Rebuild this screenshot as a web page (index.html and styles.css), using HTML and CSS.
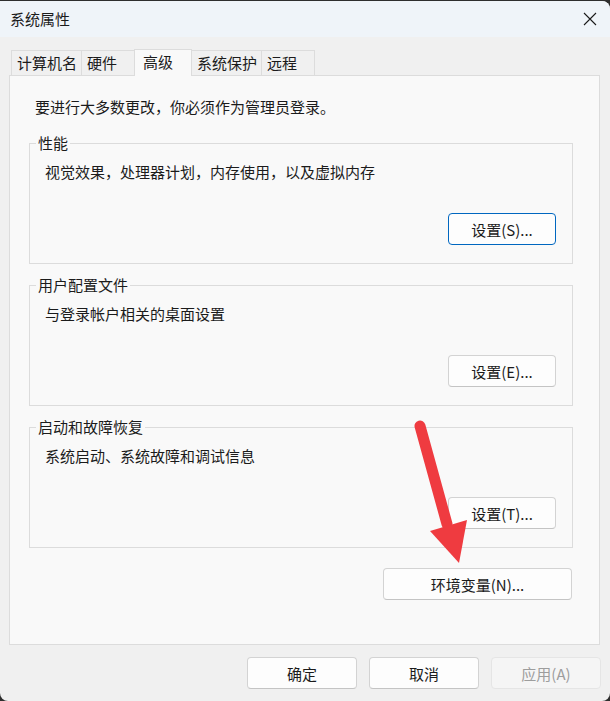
FILE: index.html
```html
<!DOCTYPE html>
<html lang="zh-CN">
<head>
  <meta charset="UTF-8">
  <title>系统属性</title>
  <meta name="viewport" content="width=device-width, initial-scale=1.0">
  <link rel="stylesheet" href="styles.css">
</head>
<body>
  <div class="window">
    <div class="titlebar">
      <span class="title">系统属性</span>
      <button class="close" aria-label="关闭">
        <svg width="14" height="14" viewBox="0 0 14 14">
          <path d="M1 1 L13 13 M13 1 L1 13" stroke="#1b1b1b" stroke-width="1.1" fill="none"/>
        </svg>
      </button>
    </div>

    <div class="tabs">
      <div class="tab">计算机名</div>
      <div class="tab">硬件</div>
      <div class="tab active">高级</div>
      <div class="tab">系统保护</div>
      <div class="tab">远程</div>
    </div>

    <div class="panel">
      <p class="note">要进行大多数更改，你必须作为管理员登录。</p>

      <fieldset class="group">
        <legend>性能</legend>
        <p class="desc">视觉效果，处理器计划，内存使用，以及虚拟内存</p>
        <div class="group-actions">
          <button class="btn btn-default">设置(S)...</button>
        </div>
      </fieldset>

      <fieldset class="group">
        <legend>用户配置文件</legend>
        <p class="desc">与登录帐户相关的桌面设置</p>
        <div class="group-actions">
          <button class="btn">设置(E)...</button>
        </div>
      </fieldset>

      <fieldset class="group">
        <legend>启动和故障恢复</legend>
        <p class="desc">系统启动、系统故障和调试信息</p>
        <div class="group-actions">
          <button class="btn">设置(T)...</button>
        </div>
      </fieldset>

      <div class="panel-actions">
        <button class="btn btn-wide">环境变量(N)...</button>
      </div>
    </div>

    <div class="footer">
      <button class="btn btn-footer">确定</button>
      <button class="btn btn-footer">取消</button>
      <button class="btn btn-footer" disabled>应用(A)</button>
    </div>

    <!-- red pointer drawn on top of the dialog -->
    <svg class="arrow" width="610" height="700" viewBox="0 1 610 700">
      <line x1="420" y1="426" x2="447" y2="524" stroke="#ef3b40" stroke-width="11" stroke-linecap="round"/>
      <polygon points="430,531 467,520 459,563" fill="#ef3b40"/>
    </svg>
  </div>
</body>
</html>
```

FILE: styles.css
```css
html, body {
  margin: 0;
  padding: 0;
  background: #2e2e2e;
  font-family: "Noto Sans CJK SC", "Noto Sans", sans-serif;
  font-size: 15px;
  color: #1b1b1b;
  overflow: hidden;
}
.window {
  position: relative;
  margin-top: 1px;
  width: 610px;
  height: 700px;
  background: #f0f0f0;
  border-radius: 0 8px 8px 8px;
  overflow: hidden;
  display: flex;
  flex-direction: column;
}
.titlebar {
  height: 36px;
  flex-shrink: 0;
  background: #eff4f9;
  display: flex;
  align-items: center;
  justify-content: space-between;
  padding: 0 13px 0 10px;
}
.title {
  line-height: 20px;
}
.close {
  border: none;
  background: transparent;
  padding: 0;
  width: 14px;
  height: 14px;
  display: flex;
}

/* tab strip */
.tabs {
  display: flex;
  align-items: flex-end;
  padding: 12px 0 0 11px;
  height: 26px;
  position: relative;
  z-index: 1;
}
.tab {
  box-sizing: border-box;
  min-width: 54px;
  height: 25px;
  padding: 0 4px 0 5px;
  border: 1px solid #dcdcdc;
  border-bottom: none;
  margin-left: -1px;
  background: #f0f0f0;
  line-height: 23px;
}
.tab:first-child {
  margin-left: 0;
}
.tab.active {
  height: 27px;
  min-width: 58px;
  padding: 0 8px;
  line-height: 24px;
  background: #f9f9f9;
  margin-bottom: -1px;
}

.panel {
  box-sizing: border-box;
  height: 570px;
  margin: 0 10px 0 9px;
  background: #f9f9f9;
  border: 1px solid #dcdcdc;
  padding: 21px 26px 0 19px;
}
.note {
  margin: 0 0 16px 6px;
  line-height: 20px;
}

.group {
  margin: 0 0 11px 0;
  padding: 0 16px 18px 15px;
  border: 1px solid #dcdcdc;
  min-width: 0;
}
.group legend {
  padding: 0 2px;
  margin-left: -9px;
  line-height: 20px;
}
.desc {
  margin: 9px 0 0 0;
  line-height: 20px;
}
.group-actions {
  display: flex;
  justify-content: flex-end;
  margin-top: 31px;
}
.panel-actions {
  display: flex;
  justify-content: flex-end;
  margin-top: 20px;
  padding-right: 1px;
}

.btn {
  box-sizing: border-box;
  height: 32px;
  width: 108px;
  padding: 0;
  font-family: inherit;
  font-size: 15px;
  color: #1b1b1b;
  background: #fdfdfd;
  border: 1px solid #d3d3d3;
  border-bottom-color: #c4c4c4;
  border-radius: 4px;
}
.btn-default {
  border: 1px solid #0067c0;
}
.btn-wide {
  width: 189px;
}
.btn-footer {
  width: 110px;
}
.btn:disabled {
  background: #f5f5f5;
  border-color: #e5e5e5;
  color: #9d9d9d;
}

.footer {
  display: flex;
  justify-content: flex-end;
  gap: 12px;
  padding: 12px 9px 0 0;
}

.arrow {
  position: absolute;
  left: 0;
  top: 0;
  pointer-events: none;
}
```
